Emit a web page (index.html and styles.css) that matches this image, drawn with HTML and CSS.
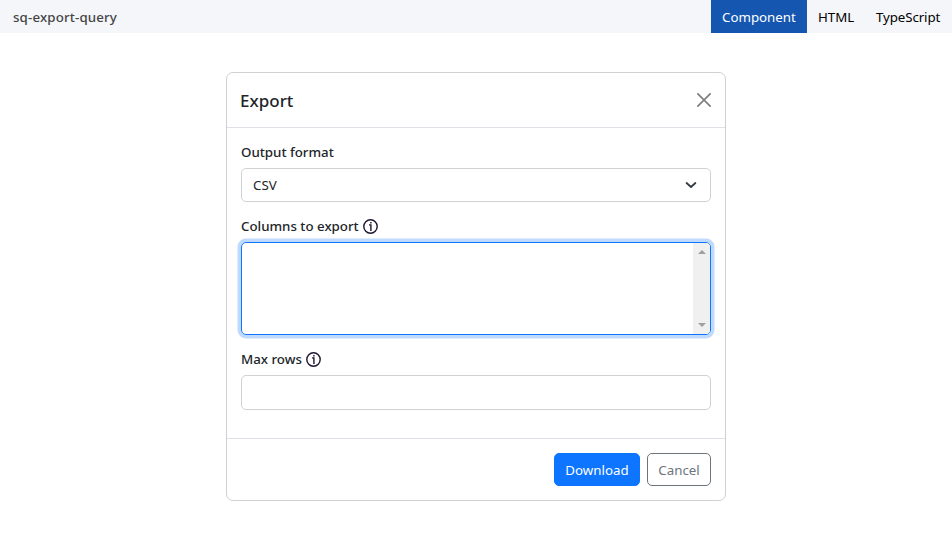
FILE: index.html
```html
<!DOCTYPE html>
<html lang="en">
<head>
<meta charset="utf-8">
<title>sq-export-query</title>
<link rel="stylesheet" href="styles.css">
</head>
<body>
<header class="topbar">
  <span class="topbar-title">sq-export-query</span>
  <nav class="tabs">
    <a class="tab tab-component active">Component</a>
    <a class="tab tab-html">HTML</a>
    <a class="tab tab-ts">TypeScript</a>
  </nav>
</header>
<main class="dialog">
  <div class="dialog-header">
    <h1 class="dialog-title">Export</h1>
    <svg class="close" viewBox="0 0 16 16"><path d="M1 1L15 15M15 1L1 15"/></svg>
  </div>
  <div class="dialog-body">
    <div class="label"><span>Output format</span></div>
    <div class="select">
      <span>CSV</span>
      <svg class="chevron" viewBox="0 0 12 12"><path d="M1.6 4L6 8L10.4 4"/></svg>
    </div>
    <div class="label"><span>Columns to export</span>
      <svg class="info" viewBox="0 0 15 15"><circle cx="7.5" cy="7.5" r="6.7"/><path d="M6 5.9H7.9V12M7.9 3V4.5"/></svg>
    </div>
    <div class="listbox">
      <div class="scrollbar">
        <svg class="arrow" viewBox="0 0 8 4"><path d="M0 4L4 0L8 4Z"/></svg>
        <svg class="arrow" viewBox="0 0 8 4"><path d="M0 0L4 4L8 0Z"/></svg>
      </div>
    </div>
    <div class="label"><span>Max rows</span>
      <svg class="info" viewBox="0 0 15 15"><circle cx="7.5" cy="7.5" r="6.7"/><path d="M6 5.9H7.9V12M7.9 3V4.5"/></svg>
    </div>
    <div class="input"></div>
  </div>
  <div class="dialog-footer">
    <button class="btn primary">Download</button>
    <button class="btn secondary">Cancel</button>
  </div>
</main>
</body>
</html>
```
FILE: styles.css
```css
* { box-sizing: border-box; }
body {
  margin: 0;
  background: #fff;
  color: #212529;
  font: 400 13.3px/21px "Noto Sans", "Open Sans", sans-serif;
}
.topbar {
  display: flex;
  justify-content: space-between;
  height: 33px;
  background: #f4f6fa;
}
.topbar-title {
  padding: 7px 0 0 13px;
  font-weight: 500;
  letter-spacing: 0.15px;
  color: #444;
}
.tabs { display: flex; }
.tab { padding: 7px 0 0 11px; color: #000; white-space: nowrap; }
.tab-component { width: 96px; }
.tab-html { width: 58px; }
.tab-ts { width: 87px; letter-spacing: -0.1px; }
.tab.active { background: #1456b0; color: #fff; }
.dialog {
  width: 500px;
  height: 429px;
  margin: 39px auto 0;
  border: 1px solid #cfd0d1;
  border-radius: 7px;
}
.dialog-header {
  display: flex;
  align-items: center;
  justify-content: space-between;
  height: 55px;
  padding: 0 14px 0 13px;
  border-bottom: 1px solid #dee2e6;
}
.dialog-title { margin: 0; padding-top: 1px; font-size: 17px; line-height: 26px; font-weight: 500; }
.close { width: 14px; height: 14px; fill: none; stroke: #808080; stroke-width: 2; stroke-linecap: round; }
.dialog-body { height: 310px; padding: 14px 14px 0; }
.label {
  display: flex;
  align-items: center;
  height: 21px;
  margin-bottom: 5px;
  font-weight: 500;
}
.select {
  display: flex;
  align-items: center;
  justify-content: space-between;
  height: 34px;
  margin-bottom: 14px;
  padding: 0 13px 0 11px;
  border: 1px solid #cfd1d4;
  border-radius: 5px;
}
.chevron { width: 12px; height: 12px; fill: none; stroke: #343a40; stroke-width: 1.8; stroke-linecap: round; stroke-linejoin: round; }
.info { width: 15px; height: 15px; margin-left: 4px; fill: none; stroke: #1f1530; stroke-width: 1.4; }
.listbox {
  display: flex;
  justify-content: flex-end;
  height: 93px;
  margin-bottom: 14px;
  border: 1px solid #0d75ff;
  border-radius: 5px;
  box-shadow: 0 0 0 3.5px #c0daff;
}
.scrollbar {
  display: flex;
  flex-direction: column;
  justify-content: space-between;
  align-items: center;
  width: 17px;
  padding: 7px 0;
  background: #f0f0f0;
  border-radius: 0 4px 4px 0;
}
.arrow { width: 8px; height: 4px; fill: #a0a0a0; }
.input {
  height: 35px;
  border: 1px solid #cfd1d4;
  border-radius: 5px;
}
.dialog-footer {
  display: flex;
  justify-content: flex-end;
  gap: 7px;
  height: 62px;
  padding: 14px 14px 0;
  border-top: 1px solid #dee2e6;
}
.btn {
  height: 33px;
  padding: 2px 0 0;
  border: 1px solid;
  border-radius: 5px;
  font: inherit;
}
.primary { width: 86px; background: #0d75ff; border-color: #0d75ff; color: #fff; }
.secondary { width: 64px; background: #fff; border-color: #6c757d; color: #6c757d; }
```
